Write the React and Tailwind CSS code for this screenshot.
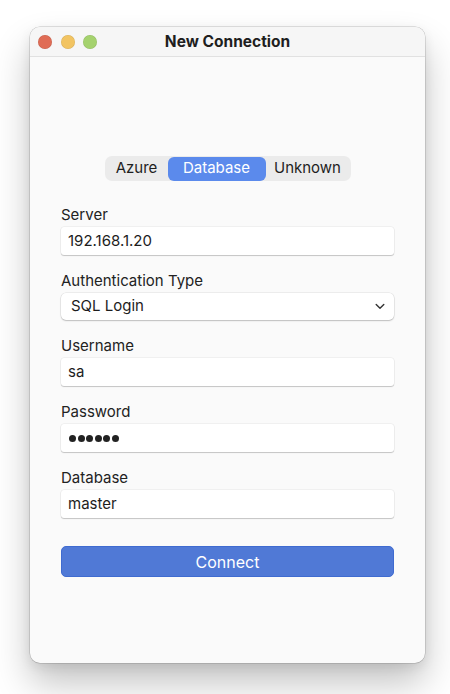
import React from "react";

function Field({ label, children }) {
  return (
    <div className="flex flex-col">
      <div className="h-[18px] text-[15px] leading-[18px] text-[#222]">{label}</div>
      <div className="mt-[3px]">{children}</div>
    </div>
  );
}

function TextBox({ value, dots }) {
  return (
    <div className="flex h-[28px] items-center rounded-[3px] bg-white pl-[7px] text-[15px] text-[#1d1d1d] shadow-[0_0_0_0.5px_rgba(0,0,0,0.08),0_1px_1px_rgba(0,0,0,0.18)]">
      {dots ? (
        <span className="flex gap-[1.5px] pl-[1px]">
          {Array.from({ length: 6 }).map((_, i) => (
            <span key={i} className="block h-[7px] w-[7px] rounded-full bg-[#222]" />
          ))}
        </span>
      ) : (
        value
      )}
    </div>
  );
}

function SelectBox({ value }) {
  return (
    <div className="flex h-[27px] items-center justify-between rounded-[5px] bg-white pl-[10px] pr-[9px] text-[15px] text-[#1d1d1d] shadow-[0_0_0_0.5px_rgba(0,0,0,0.1),0_1px_1.5px_rgba(0,0,0,0.2)]">
      <span>{value}</span>
      <svg width="10" height="7" viewBox="0 0 10 7" fill="none">
        <path d="M1.2 1.5 L5 5.2 L8.8 1.5" stroke="#333" strokeWidth="1.4" strokeLinecap="round" strokeLinejoin="round" />
      </svg>
    </div>
  );
}

export default function App() {
  return (
    <div
      className="h-[694px] w-[450px] bg-white pl-[30px] pt-[27px]"
      style={{ fontFamily: "Inter, 'Noto Sans', sans-serif" }}
    >
      <div className="flex h-[636px] w-[395px] flex-col overflow-hidden rounded-[10px] bg-[#fafafa] shadow-[0_0_0_0.5px_rgba(0,0,0,0.22),0_20px_36px_rgba(0,0,0,0.24),0_4px_12px_rgba(0,0,0,0.08)]">
        {/* title bar */}
        <div className="relative flex h-[30px] shrink-0 items-center border-b border-[#e1e1e1] bg-[#f6f6f6]">
          <div className="flex items-center gap-[8.5px] pl-[8px]">
            <span className="block h-[14px] w-[14px] rounded-full bg-[#e06c55] shadow-[inset_0_0_0_0.5px_rgba(0,0,0,0.12)]" />
            <span className="block h-[14px] w-[14px] rounded-full bg-[#f2c462] shadow-[inset_0_0_0_0.5px_rgba(0,0,0,0.1)]" />
            <span className="block h-[14px] w-[14px] rounded-full bg-[#a5d26e] shadow-[inset_0_0_0_0.5px_rgba(0,0,0,0.1)]" />
          </div>
          <div className="absolute inset-0 flex items-center justify-center text-[15.5px] font-bold text-[#1e1e1e]">
            New Connection
          </div>
        </div>

        {/* content */}
        <div className="flex flex-col px-[31px] pt-[99px]">
          <div className="flex justify-center">
            <div className="flex h-[25px] items-center rounded-[7px] bg-[#ebebeb] p-[1px] text-[15px] text-[#1e1e1e]">
              <div className="flex h-[23px] w-[62px] items-center justify-center">Azure</div>
              <div className="flex h-[24px] w-[98px] items-center justify-center rounded-[6px] bg-[#5b8aec] text-white">
                Database
              </div>
              <div className="flex h-[23px] w-[84px] items-center justify-center">Unknown</div>
            </div>
          </div>

          <div className="mt-[25px] flex flex-col gap-[17px]">
            <Field label="Server">
              <TextBox value="192.168.1.20" />
            </Field>
            <Field label="Authentication Type">
              <SelectBox value="SQL Login" />
            </Field>
            <Field label="Username">
              <TextBox value="sa" />
            </Field>
            <Field label="Password">
              <TextBox dots />
            </Field>
            <Field label="Database">
              <TextBox value="master" />
            </Field>
          </div>

          <button className="mt-[28px] flex h-[31px] items-center justify-center rounded-[5px] border border-[#3f6bd0] bg-[#5079d6] text-[16px] text-white">
            Connect
          </button>
        </div>
      </div>
    </div>
  );
}
